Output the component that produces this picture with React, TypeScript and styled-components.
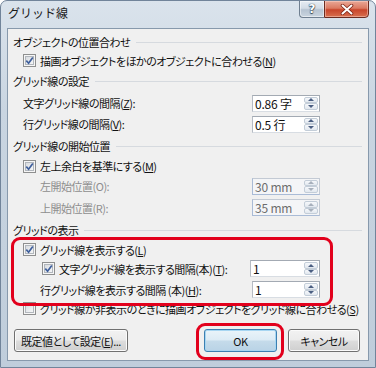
import styled, { createGlobalStyle } from "styled-components";

const GlobalStyle = createGlobalStyle`
  html, body {
    margin: 0;
    padding: 0;
    background: #ffffff;
  }
`;

const CheckBox = ({ checked, disabled }: { checked?: boolean; disabled?: boolean }) => (
  <Box $disabled={disabled}>
    {checked && (
      <svg width="9" height="9" viewBox="0 0 9 9">
        <path d="M1.3 4.6 L3.6 7.2 L7.8 1.4" stroke="#3f5f9c" strokeWidth="1.7" fill="none" />
      </svg>
    )}
  </Box>
);

const Spin = ({ value, width, disabled }: { value: string; width: number; disabled?: boolean }) => (
  <SpinField $w={width} $disabled={disabled}>
    <SpinText $disabled={disabled}>{value}</SpinText>
    <SpinButtons>
      <SpinBtn>
        <ArrowUp $disabled={disabled} />
      </SpinBtn>
      <SpinBtn>
        <ArrowDown $disabled={disabled} />
      </SpinBtn>
    </SpinButtons>
  </SpinField>
);

export default function App() {
  return (
    <>
      <GlobalStyle />
      <Window>
        <TitleBar>
          <Title>グリッド線</Title>
          <CaptionButtons>
            <HelpButton>?</HelpButton>
            <CloseButton>
              <svg width="14" height="11" viewBox="0 0 14 11">
                <path d="M2.5 1.5 L11.5 9.5 M11.5 1.5 L2.5 9.5" stroke="#7a2416" strokeWidth="3.6" strokeLinecap="round" />
                <path d="M2.5 1.5 L11.5 9.5 M11.5 1.5 L2.5 9.5" stroke="#ffffff" strokeWidth="2" strokeLinecap="round" />
              </svg>
            </CloseButton>
          </CaptionButtons>
        </TitleBar>

        <Client>
          <GroupHeader $h={18}>オブジェクトの位置合わせ</GroupHeader>
          <Row $h={19} $indent={10}>
            <CheckBox checked />
            <Label>
              描画オブジェクトをほかのオブジェクトに合わせる(<u>N</u>)
            </Label>
          </Row>

          <GroupHeader $h={22}>グリッド線の設定</GroupHeader>
          <Row $h={22} $indent={10}>
            <Label $grow>
              文字グリッド線の間隔(<u>Z</u>):
            </Label>
            <Spin value="0.86 字" width={68} />
          </Row>
          <Row $h={20} $indent={10}>
            <Label $grow>
              行グリッド線の間隔(<u>V</u>):
            </Label>
            <Spin value="0.5 行" width={68} />
          </Row>

          <GroupHeader $h={23}>グリッド線の開始位置</GroupHeader>
          <Row $h={18} $indent={10}>
            <CheckBox checked />
            <Label>
              左上余白を基準にする(<u>M</u>)
            </Label>
          </Row>
          <Row $h={22} $indent={27}>
            <Label $grow $disabled>
              左開始位置(O):
            </Label>
            <Spin value="30 mm" width={68} disabled />
          </Row>
          <Row $h={21} $indent={27}>
            <Label $grow $disabled>
              上開始位置(R):
            </Label>
            <Spin value="35 mm" width={68} disabled />
          </Row>

          <GroupHeader $h={23}>グリッドの表示</GroupHeader>
          <Row $h={17} $indent={10}>
            <CheckBox checked />
            <Label>
              グリッド線を表示する(<u>L</u>)
            </Label>
          </Row>
          <Row $h={21} $indent={29}>
            <CheckBox checked />
            <Label $grow>
              文字グリッド線を表示する間隔(本)(<u>T</u>):
            </Label>
            <Spin value="1" width={70} />
          </Row>
          <Row $h={21} $indent={27}>
            <Label $grow>
              行グリッド線を表示する間隔 (本)(<u>H</u>):
            </Label>
            <Spin value="1" width={68} />
          </Row>
          <Row $h={17} $indent={10}>
            <CheckBox />
            <Label>
              グリッド線が非表示のときに描画オブジェクトをグリッド線に合わせる(<u>S</u>)
            </Label>
          </Row>

          <ButtonRow>
            <PushButton $w={114}>
              既定値として設定(<u>E</u>)...
            </PushButton>
            <Spacer />
            <PushButton $w={73} $default>
              OK
            </PushButton>
            <PushButton $w={72}>キャンセル</PushButton>
          </ButtonRow>
        </Client>

        <Annotation $x={10} $y={236} $w={322} $h={69} />
        <Annotation $x={195} $y={322} $w={88} $h={37} />
      </Window>
    </>
  );
}

const Window = styled.div`
  position: relative;
  width: 376px;
  height: 368px;
  box-sizing: border-box;
  display: flex;
  flex-direction: column;
  padding: 0 6px 6px 6px;
  background: linear-gradient(180deg, #dae3ec 0%, #c9d5e1 30%, #bfcddb 100%);
  border: 1px solid #71849a;
  border-radius: 7px 7px 0 0;
  font-family: "Noto Sans CJK JP", "Noto Sans", sans-serif;
  font-size: 11px;
  font-feature-settings: "palt";
  letter-spacing: -0.5px;
  color: #111111;
  overflow: hidden;
`;

const TitleBar = styled.div`
  height: 27px;
  flex: none;
  display: flex;
  justify-content: space-between;
  align-items: flex-start;
`;

const Title = styled.div`
  padding: 4px 0 0 1px;
  font-size: 12px;
  line-height: 16px;
  font-feature-settings: normal;
  letter-spacing: 0;
  color: #1a1a1a;
`;

const CaptionButtons = styled.div`
  display: flex;
  margin-top: -1px;
  margin-right: 0;
`;

const HelpButton = styled.div`
  width: 25px;
  height: 18px;
  box-sizing: border-box;
  display: flex;
  align-items: center;
  justify-content: center;
  border: 1px solid #6f7f90;
  border-right: none;
  border-radius: 0 0 0 4px;
  background: linear-gradient(180deg, #e7edf3 0%, #d3dce6 45%, #b6c3d1 55%, #c9d4df 100%);
  box-shadow: inset 0 0 0 1px rgba(255, 255, 255, 0.5);
  font-family: "DejaVu Sans", sans-serif;
  font-weight: bold;
  font-size: 12px;
  font-feature-settings: normal;
  letter-spacing: 0;
  color: #ffffff;
  text-shadow: 0 0 1px #334455, 0 0 1px #334455, 0 1px 1px #334455;
`;

const CloseButton = styled.div`
  width: 45px;
  height: 18px;
  box-sizing: border-box;
  display: flex;
  align-items: center;
  justify-content: center;
  border: 1px solid #6b2b20;
  border-radius: 0 0 4px 0;
  background: linear-gradient(180deg, #e9a897 0%, #db7a62 45%, #c8452b 55%, #d8704f 100%);
  box-shadow: inset 0 0 0 1px rgba(255, 220, 210, 0.45);
`;

const Client = styled.div`
  flex: 1;
  display: flex;
  flex-direction: column;
  background: #f0f0f0;
  border: 1px solid #8799ac;
  padding: 4px 5px 0 5px;
`;

const Row = styled.div<{ $h: number; $indent?: number }>`
  display: flex;
  align-items: center;
  gap: 4px;
  height: ${(p) => p.$h}px;
  padding-left: ${(p) => p.$indent ?? 0}px;
  flex: none;
`;

const GroupHeader = styled(Row)`
  gap: 0;
  white-space: nowrap;
  &::after {
    content: "";
    flex: 1;
    height: 1px;
    margin: 1px 1px 0 6px;
    background: #d6dadf;
  }
`;

const Label = styled.span<{ $grow?: boolean; $disabled?: boolean }>`
  white-space: nowrap;
  flex: ${(p) => (p.$grow ? 1 : "none")};
  color: ${(p) => (p.$disabled ? "#8e8e8e" : "#111111")};
  line-height: 14px;
  u {
    text-decoration-thickness: 1px;
    text-underline-offset: 1px;
  }
`;

const Box = styled.span<{ $disabled?: boolean }>`
  width: 13px;
  height: 13px;
  box-sizing: border-box;
  flex: none;
  display: flex;
  align-items: center;
  justify-content: center;
  border: 1px solid ${(p) => (p.$disabled ? "#c2c2c2" : "#8e8f8f")};
  background: linear-gradient(135deg, #cfd3d9 0%, #eceef0 60%, #fbfbfb 100%);
  box-shadow: inset 0 0 0 1px #f6f6f6, inset 0 0 0 2px #b2b7bd;
`;

const SpinField = styled.div<{ $w: number; $disabled?: boolean }>`
  width: ${(p) => p.$w}px;
  height: 17px;
  box-sizing: border-box;
  flex: none;
  display: flex;
  margin-right: 43px;
  border: 1px solid ${(p) => (p.$disabled ? "#c3cad4" : "#a3aab3")};
  border-left-color: ${(p) => (p.$disabled ? "#a9bbd6" : "#b6bcc4")};
  border-bottom-color: ${(p) => (p.$disabled ? "#a9bbd6" : "#d8dde3")};
  background: ${(p) => (p.$disabled ? "#f4f5f7" : "#ffffff")};
`;

const SpinText = styled.div<{ $disabled?: boolean }>`
  flex: 1;
  padding-left: 2px;
  font-size: 12px;
  line-height: 15px;
  letter-spacing: -0.2px;
  color: ${(p) => (p.$disabled ? "#6d6d6d" : "#111111")};
`;

const SpinButtons = styled.div`
  width: 15px;
  display: flex;
  flex-direction: column;
  padding: 1px 1px 1px 0;
  box-sizing: border-box;
`;

const SpinBtn = styled.div`
  flex: 1;
  display: flex;
  align-items: center;
  justify-content: center;
  border: 1px solid #c3cdd8;
  border-radius: 2px;
  background: linear-gradient(180deg, #f6f8fb 0%, #e2e8ef 100%);
`;

const ArrowUp = styled.span<{ $disabled?: boolean }>`
  width: 0;
  height: 0;
  border-left: 3px solid transparent;
  border-right: 3px solid transparent;
  border-bottom: 3px solid ${(p) => (p.$disabled ? "#a7b0bc" : "#4b5f82")};
`;

const ArrowDown = styled.span<{ $disabled?: boolean }>`
  width: 0;
  height: 0;
  border-left: 3px solid transparent;
  border-right: 3px solid transparent;
  border-top: 3px solid ${(p) => (p.$disabled ? "#a7b0bc" : "#4b5f82")};
`;

const ButtonRow = styled.div`
  display: flex;
  align-items: center;
  gap: 11px;
  margin-top: 12px;
  padding: 0 3px 0 1px;
  height: 23px;
  flex: none;
`;

const Spacer = styled.div`
  flex: 1;
`;

const PushButton = styled.div<{ $w: number; $default?: boolean }>`
  width: ${(p) => p.$w}px;
  height: 23px;
  box-sizing: border-box;
  display: flex;
  align-items: center;
  justify-content: center;
  border: 1px solid ${(p) => (p.$default ? "#3c7fb1" : "#707070")};
  border-radius: 3px;
  background: ${(p) =>
    p.$default
      ? "linear-gradient(180deg, #eaf4fa 0%, #dcebf5 48%, #c5dbea 52%, #b9d3e6 100%)"
      : "linear-gradient(180deg, #f2f2f2 0%, #ebebeb 48%, #dddddd 52%, #cfcfcf 100%)"};
  box-shadow: inset 0 0 0 1px ${(p) => (p.$default ? "#a7d6f2" : "#fbfbfb")};
  white-space: nowrap;
  color: #111111;
`;

const Annotation = styled.div<{ $x: number; $y: number; $w: number; $h: number }>`
  position: absolute;
  left: ${(p) => p.$x}px;
  top: ${(p) => p.$y}px;
  width: ${(p) => p.$w}px;
  height: ${(p) => p.$h}px;
  box-sizing: border-box;
  border: 3px solid #e2001c;
  border-radius: 9px;
  pointer-events: none;
`;
